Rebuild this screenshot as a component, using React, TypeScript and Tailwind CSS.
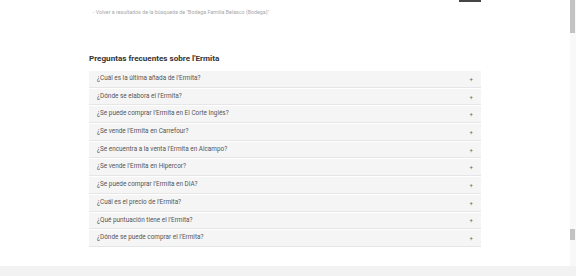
import React from "react";

const questions = [
  "¿Cuál es la última añada de l'Ermita?",
  "¿Dónde se elabora el l'Ermita?",
  "¿Se puede comprar l'Ermita en El Corte Inglés?",
  "¿Se vende l'Ermita en Carrefour?",
  "¿Se encuentra a la venta l'Ermita en Alcampo?",
  "¿Se vende l'Ermita en Hipercor?",
  "¿Se puede comprar l'Ermita en DIA?",
  "¿Cuál es el precio de l'Ermita?",
  "¿Qué puntuación tiene el l'Ermita?",
  "¿Dónde se puede comprar el l'Ermita?",
];

export default function App() {
  return (
    <div
      className="w-[576px] h-[276px] overflow-hidden bg-white flex flex-col"
      style={{ fontFamily: "Roboto, 'Liberation Sans', sans-serif" }}
    >
      <div className="flex flex-1 min-h-0">
        <div className="flex-1 flex flex-col">
          <div className="ml-[89px] w-[392px] flex flex-col">
            <div className="self-end w-[22px] h-[2px] bg-[#454545]" />
            <div className="mt-[7px] ml-[4px] text-[5.3px] leading-[6px] text-[#a8a8a8]">
              - Volver a resultados de la búsqueda de "Bodega Familia Belasco (Bodega)"
            </div>
            <h2 className="mt-[38px] text-[8.1px] leading-[10px] font-bold text-[#333]">
              Preguntas frecuentes sobre l'Ermita
            </h2>
            <div className="mt-[7px] flex flex-col">
              {questions.map((q) => (
                <div
                  key={q}
                  className="h-[17.7px] flex items-center justify-between pl-[8px] pr-[8px] bg-[#f5f5f5] border-b border-[#e6e6e6] border-t border-t-white"
                >
                  <span className="text-[6.4px] text-[#555]">{q}</span>
                  <span className="text-[6px] text-[#666] leading-none">+</span>
                </div>
              ))}
            </div>
          </div>
        </div>
        <div className="w-[6px] flex flex-col bg-[#f8f8f8]">
          <div className="h-[33px] w-[5px] bg-[#c3c3c3]" />
          <div className="h-[196px]" />
          <div className="h-[11px] w-[5px] bg-[#c3c3c3]" />
        </div>
      </div>
      <div className="h-[10px] bg-[#f2f2f2]" />
    </div>
  );
}
